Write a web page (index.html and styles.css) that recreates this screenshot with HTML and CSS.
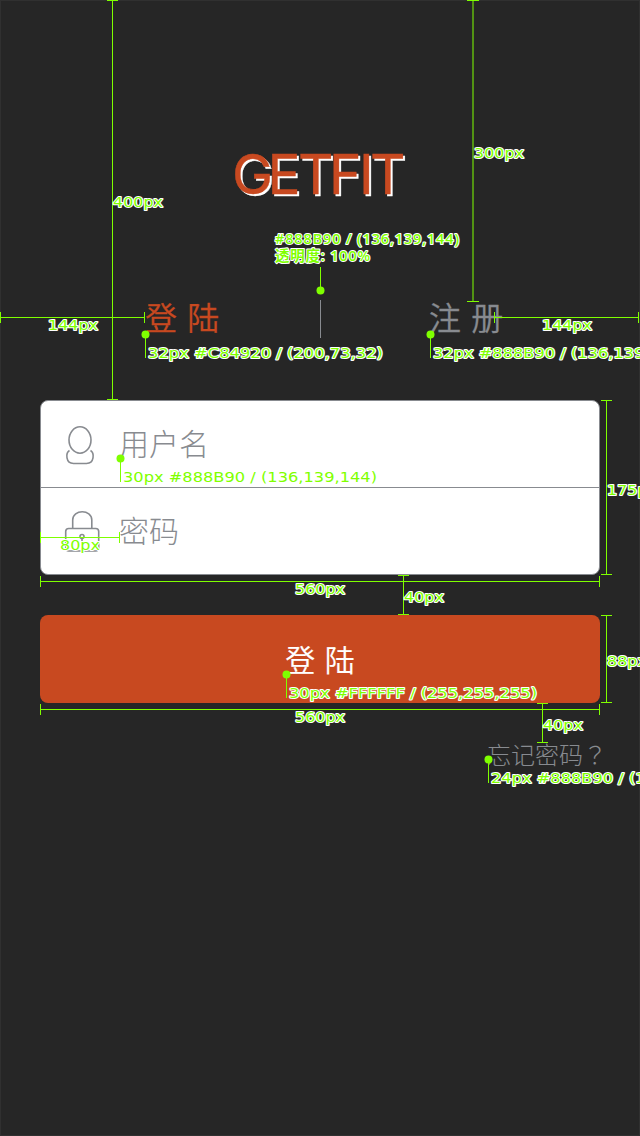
FILE: index.html
```html
<!DOCTYPE html>
<html lang="zh-CN">
<head>
<meta charset="utf-8">
<title>GETFIT</title>
<link rel="stylesheet" href="styles.css">
</head>
<body>
<main class="screen">
  <h1 class="brand"><svg class="brand-mark" width="174" height="50" viewBox="0 0 174 50"><text y="44" x="-1 34.500 65 96 126 137">GETFIT</text></svg></h1>
  <nav class="tabs">
    <a class="tab active">登 陆</a>
    <span class="tab-divider"></span>
    <a class="tab">注 册</a>
  </nav>
  <form class="login">
    <div class="fields">
      <label class="field">
        <svg class="icon" width="40" height="44" viewBox="60 422 40 44"><ellipse cx="80" cy="440" rx="11" ry="13.200"/><path d="M69.500 450.500C65.500 453 65.500 463.500 73.500 463.500H86.500C94.500 463.500 94.500 453 90.500 450.500"/></svg>
        <span class="hint">用户名</span>
      </label>
      <label class="field">
        <svg class="icon" width="40" height="44" viewBox="60 509 40 44"><path d="M72.700 528V520C72.700 509 91.800 509 91.800 520V528"/><rect x="65.700" y="528.500" width="33" height="22.500" rx="3"/><circle cx="82" cy="536.500" r="2"/><path d="M82 539V543"/></svg>
        <span class="hint">密码</span>
      </label>
    </div>
    <div class="submit">登 陆</div>
    <a class="forgot">忘记密码<span class="mark" lang="zh-TW">？</span></a>
  </form>
  <svg class="specs" width="640" height="1136" viewBox="0 0 640 1136">
    <g class="rules">
      <path d="M112.500 0V400M107 .5H118M107 399.500H118"/>
      <path class="soft" d="M473 0V301"/>
      <path d="M467 .5H479M467 301.500H479"/>
      <path d="M0 317.500H145M.5 312V323M144.500 312V323"/>
      <path d="M494 317.500H639M494.500 312V323M638.500 312V323"/>
      <path d="M606.500 400V575M601 400.500H612M601 574.500H612"/>
      <path d="M606.500 615V703M601 615.500H612M601 702.500H612"/>
      <path d="M40 581.500H600M40.500 576V587M599.500 576V587"/>
      <path d="M40 709.500H600M40.500 704V715M599.500 704V715"/>
      <path d="M403.500 575V615M398 575.500H409M398 614.500H409"/>
      <path d="M542.500 703V743M537 703.500H548M537 742.500H548"/>
      <path d="M40 537.500H120M40.500 532V543M119.500 532V543"/>
      <path d="M320.500 267V290M145.500 334V358M430.500 334V358M120.500 458V482M286.500 674V698M488.500 759V783"/>
    </g>
    <g class="dots">
      <circle cx="320.500" cy="290.500" r="4"/><circle cx="145.500" cy="334.500" r="4"/><circle cx="430.500" cy="334.500" r="4"/>
      <circle cx="120.500" cy="458.500" r="4"/><circle cx="286.500" cy="674.500" r="4"/><circle cx="488.500" cy="759.500" r="4"/>
    </g>
    <g class="labels">
      <text x="113" y="207" textLength="50" lengthAdjust="spacingAndGlyphs">400px</text>
      <text x="474" y="158" textLength="50" lengthAdjust="spacingAndGlyphs">300px</text>
      <text x="48" y="330" textLength="50" lengthAdjust="spacingAndGlyphs">144px</text>
      <text x="542" y="330" textLength="50" lengthAdjust="spacingAndGlyphs">144px</text>
      <text x="148" y="358" textLength="235" lengthAdjust="spacingAndGlyphs">32px #C84920 / (200,73,32)</text>
      <text x="433" y="358" textLength="254" lengthAdjust="spacingAndGlyphs">32px #888B90 / (136,139,144)</text>
      <text x="123" y="482" textLength="254" lengthAdjust="spacingAndGlyphs">30px #888B90 / (136,139,144)</text>
      <text x="60" y="550" textLength="40" lengthAdjust="spacingAndGlyphs">80px</text>
      <text x="607" y="495" textLength="50" lengthAdjust="spacingAndGlyphs">175px</text>
      <text x="295" y="594" textLength="50" lengthAdjust="spacingAndGlyphs">560px</text>
      <text x="404" y="602" textLength="40" lengthAdjust="spacingAndGlyphs">40px</text>
      <text x="607" y="666" textLength="40" lengthAdjust="spacingAndGlyphs">88px</text>
      <text x="289" y="698" textLength="248" lengthAdjust="spacingAndGlyphs">30px #FFFFFF / (255,255,255)</text>
      <text x="295" y="722" textLength="50" lengthAdjust="spacingAndGlyphs">560px</text>
      <text x="543" y="730" textLength="40" lengthAdjust="spacingAndGlyphs">40px</text>
      <text x="491" y="783" textLength="254" lengthAdjust="spacingAndGlyphs">24px #888B90 / (136,139,144)</text>
      <text class="narrow" x="275" y="244" textLength="184">#888B90 / (136,139,144)</text>
      <text class="narrow" x="275" y="261" textLength="95">透明度: 100%</text>
    </g>
  </svg>
</main>
</body>
</html>
```
FILE: styles.css
```css
* { box-sizing: border-box; }
body { margin: 0; background: #262626; }
.screen {
  position: relative;
  width: 640px;
  height: 1136px;
  overflow: hidden;
  padding: 150px 40px 0;
  box-shadow: inset 0 0 0 1px #303030;
  background: #262626;
  color: #888b90;
  font-family: "Noto Sans CJK SC", sans-serif;
  font-weight: 300;
}
.brand { margin: 0; height: 50px; display: flex; justify-content: center; }
.brand-mark {
  overflow: visible;
  fill: #c84920;
  stroke: #c84920;
  stroke-width: .4px;
  font: 400 55px Inter, sans-serif;
  filter: drop-shadow(2px 2px 0 #fff);
}
.tabs {
  height: 38px;
  margin-top: 100px;
  padding-left: 105px;
  display: grid;
  grid-template-columns: 175px 109px auto;
}
.tab {
  font-size: 32px;
  font-weight: 350;
  line-height: 32px;
  word-spacing: 3px;
  white-space: nowrap;
  -webkit-text-stroke: .3px currentColor;
}
.tab.active { color: #c84920; }
.tab-divider { width: 1px; height: 38px; background: #888b90; }
.login { margin-top: 62px; display: flex; flex-direction: column; }
.fields {
  height: 175px;
  border: 1px solid #888b90;
  border-radius: 8px;
  background: #fff;
  display: grid;
  grid-template-rows: 87px 86px;
}
.field {
  display: flex;
  align-items: center;
  gap: 19px;
  padding-left: 19px;
  font-size: 30px;
  line-height: 40px;
}
.hint { padding-bottom: 5px; }
.field:first-child { border-bottom: 1px solid #888b90; }
.icon { fill: none; stroke: #888b90; stroke-width: 1.6px; }
.submit {
  height: 88px;
  margin-top: 40px;
  border-radius: 8px;
  background: #c84920;
  color: #fff;
  font-size: 30px;
  font-weight: 350;
  line-height: 86px;
  word-spacing: 3px;
  text-align: center;
  -webkit-text-stroke: .2px currentColor;
}
.forgot { align-self: flex-end; margin-top: 36px; margin-right: -7px; font-size: 24px; line-height: 30px; }
.mark { font-family: "Noto Sans CJK TC", sans-serif; }
.specs { position: absolute; left: 0; top: 0; }
.rules { fill: none; stroke: #7fff00; stroke-width: 1px; shape-rendering: crispEdges; }
.rules .soft { shape-rendering: auto; }
.dots { fill: #7fff00; }
.labels {
  fill: #7fff00;
  stroke: #fff;
  stroke-width: 2px;
  stroke-linejoin: round;
  paint-order: stroke;
  font: 13.5px "DejaVu Sans", Verdana, sans-serif;
}
.labels .narrow { font: 600 14.5px "Open Sans", "Noto Sans CJK SC", sans-serif; }
```
